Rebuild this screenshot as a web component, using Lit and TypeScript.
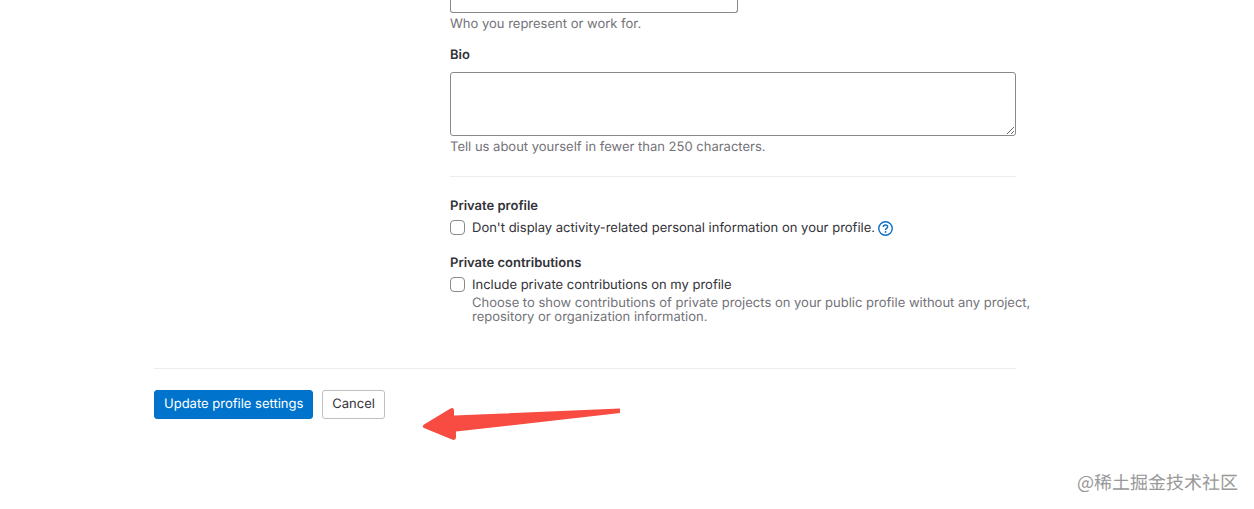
import { LitElement, html, css } from "lit";
import { customElement } from "lit/decorators.js";

@customElement("app-root")
export class AppRoot extends LitElement {
  static styles = css`
    :host {
      display: block;
      position: relative;
      min-height: 100vh;
      box-sizing: border-box;
      overflow: hidden;
      background: #fff;
      color: #333238;
      font: 400 13px/16px Inter, "Noto Sans CJK SC", sans-serif;
      text-rendering: geometricPrecision;
    }
    * { box-sizing: border-box; }
    form { margin: 0 238px 0 154px; }
    .section {
      display: grid;
      grid-template-columns: minmax(0, 1fr) minmax(0, 2fr);
      column-gap: 13px;
      padding-bottom: 44px;
      border-bottom: 1px solid #ececef;
    }
    .fields { grid-column: 2; }
    .text, .area {
      display: block;
      width: 100%;
      margin: 0;
      padding: 8px 12px;
      border: 1px solid #89888d;
      border-radius: 3px;
      background: #fff;
      color: inherit;
      font: inherit;
    }
    .text {
      max-width: 288px;
      height: 13px;
      padding-block: 0;
      border-top: 0;
      border-radius: 0 0 3px 3px;
    }
    .area { height: 64px; resize: vertical; }
    .help {
      margin: 4px 0 0;
      color: #737278;
      line-height: 14px;
    }
    .title {
      display: block;
      margin: 0;
      padding: 0;
      font-weight: 600;
    }
    .bio { margin: 16px 0 9px; }
    .rule {
      height: 1px;
      margin: 22px 0 21px;
      border: 0;
      background: #ececef;
    }
    fieldset { margin: 0; padding: 0; border: 0; min-width: 0; }
    fieldset + fieldset { margin-top: 19px; }
    .option {
      display: grid;
      grid-template-columns: 15px minmax(0, 1fr);
      column-gap: 7px;
      margin-top: 6px;
    }
    .option .help { grid-column: 2; margin: 3px -20px 0 0; }
    .line { display: flex; align-items: center; gap: 3px; height: 16px; }
    .check {
      appearance: none;
      width: 15px;
      height: 15px;
      margin: 0;
      border: 1px solid #89888d;
      border-radius: 4px;
      background: #fff;
    }
    .check:checked { background: #1f75cb; }
    .info { display: flex; color: #1070c4; }
    .info svg { display: block; }
    .actions { display: flex; gap: 9px; padding-top: 21px; }
    .btn {
      height: 29px;
      margin: 0;
      padding: 0 9px 1px;
      border: 1px solid #bfbfc3;
      border-radius: 3px;
      background: #fff;
      color: #333238;
      font: inherit;
      text-rendering: inherit;
    }
    .confirm { border-color: #0072c6; background: #0074cc; color: #fff; }
    .arrow { position: absolute; left: 422px; top: 406px; }
    .mark {
      position: absolute;
      right: 16px;
      bottom: 15px;
      color: #999;
      font-size: 18px;
      line-height: 24px;
      font-family: "Noto Sans CJK SC", sans-serif;
    }
  `;

  render() {
    return html`
      <form @submit=${(e: Event) => e.preventDefault()}>
        <div class="section">
          <div class="fields">
            <input class="text" id="org" type="text" aria-label="Organization" aria-describedby="org-help" />
            <p class="help" id="org-help">Who you represent or work for.</p>
            <label class="title bio" for="bio">Bio</label>
            <textarea class="area" id="bio" aria-describedby="bio-help"></textarea>
            <p class="help" id="bio-help">Tell us about yourself in fewer than 250 characters.</p>
            <hr class="rule" />
            <fieldset>
              <legend class="title">Private profile</legend>
              <div class="option">
                <input class="check" id="private" type="checkbox" />
                <div class="line">
                  <label for="private">Don't display activity-related personal information on your profile.</label>
                  <a class="info" href="#private" aria-label="Help">
                    <svg width="15" height="15" viewBox="0 0 16 16" fill="none" stroke="currentColor">
                      <circle cx="8" cy="8" r="7.2" stroke-width="1.5" />
                      <path d="M5.7 6.3C5.7 5 6.700 4.200 8 4.200s2.300.8 2.300 2C10.300 7.800 8 7.800 8 9.600" stroke-width="1.600" />
                      <circle cx="8" cy="11.600" r="1" fill="currentColor" stroke="none" />
                    </svg>
                  </a>
                </div>
              </div>
            </fieldset>
            <fieldset>
              <legend class="title">Private contributions</legend>
              <div class="option">
                <input class="check" id="contrib" type="checkbox" aria-describedby="contrib-help" />
                <div class="line"><label for="contrib">Include private contributions on my profile</label></div>
                <p class="help" id="contrib-help">
                  Choose to show contributions of private projects on your public profile without any project, repository or organization information.
                </p>
              </div>
            </fieldset>
          </div>
        </div>
        <div class="actions">
          <button class="btn confirm" type="submit">Update profile settings</button>
          <button class="btn" type="reset">Cancel</button>
        </div>
      </form>
      <svg class="arrow" width="200" height="36" viewBox="0 0 200 36" aria-hidden="true">
        <path d="M2 18.500 28.500 2.500Q31.500 1 32 4V9.500L198 2.500V7L34 25.500V31.500Q33.500 35 30 33.500L2 22Q-.5 20.500 2 18.500Z" fill="#f84b41" />
      </svg>
      <div class="mark">@稀土掘金技术社区</div>
    `;
  }
}
